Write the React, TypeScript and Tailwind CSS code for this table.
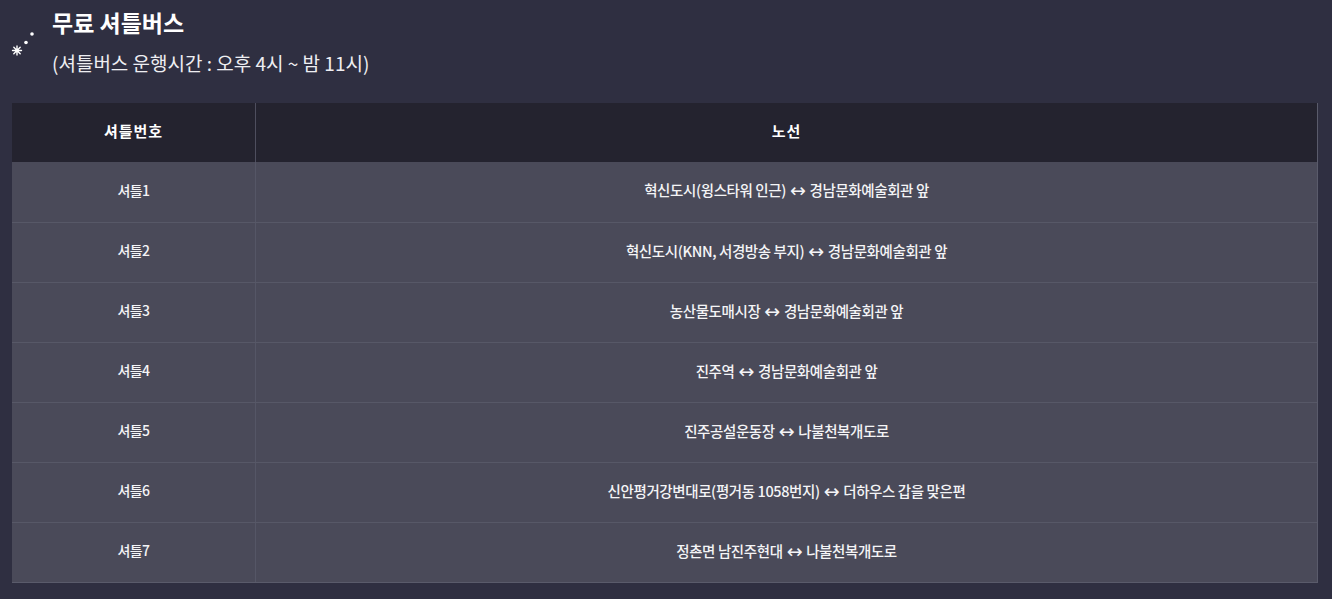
import React from "react";

const rows: [string, string, string][] = [
  ["셔틀1", "혁신도시(윙스타워 인근)", "경남문화예술회관 앞"],
  ["셔틀2", "혁신도시(KNN, 서경방송 부지)", "경남문화예술회관 앞"],
  ["셔틀3", "농산물도매시장", "경남문화예술회관 앞"],
  ["셔틀4", "진주역", "경남문화예술회관 앞"],
  ["셔틀5", "진주공설운동장", "나불천복개도로"],
  ["셔틀6", "신안평거강변대로(평거동 1058번지)", "더하우스 갑을 맞은편"],
  ["셔틀7", "정촌면 남진주현대", "나불천복개도로"],
];

function Sparkle() {
  return (
    <svg width="30" height="34" viewBox="0 0 30 34" className="shrink-0">
      <circle cx="24" cy="8" r="1.8" fill="#fff" />
      <circle cx="18" cy="16.5" r="1.8" fill="#fff" />
      <g stroke="#fff" strokeWidth="1.4" strokeLinecap="round">
        <line x1="9" y1="20" x2="9" y2="29" />
        <line x1="4.5" y1="24.5" x2="13.5" y2="24.5" />
        <line x1="5.8" y1="21.3" x2="12.2" y2="27.7" />
        <line x1="12.2" y1="21.3" x2="5.8" y2="27.7" />
      </g>
      <circle cx="9" cy="24.5" r="2" fill="#fff" />
    </svg>
  );
}

export default function App() {
  return (
    <div
      className="w-[1332px] h-[599px] bg-[#2f2f41] text-white overflow-hidden"
      style={{ fontFamily: '"Noto Sans CJK KR", "Noto Sans", sans-serif' }}
    >
      <div className="flex pl-[8px] pt-[6px]">
        <div className="pt-[20px]">
          <Sparkle />
        </div>
        <div className="ml-[14px]">
          <div className="text-[23px] font-bold leading-[32px] tracking-[0px]">무료 셔틀버스</div>
          <div className="text-[19px] leading-[28px] mt-[11px] tracking-[0px] text-[#eeeef2]">
            (셔틀버스 운행시간 : 오후 4시 ~ 밤 11시)
          </div>
        </div>
      </div>
      <div className="mx-[12px] mt-[26px] w-[1306px] border-r border-b border-[#5a5b6b]">
        <div className="flex h-[59px] bg-[#24232f]">
          <div className="w-[244px] flex items-center justify-center border-r border-[#4e4e5e] text-[15px] font-bold tracking-[1px] pb-[2px]">
            셔틀번호
          </div>
          <div className="flex-1 flex items-center justify-center text-[15px] font-bold tracking-[1px] pb-[2px]">
            노선
          </div>
        </div>
        {rows.map(([a, b, c], i) => (
          <div
            key={a}
            className={`flex h-[60px] bg-[#4a4a59] ${i === 0 ? "" : "border-t border-[#575867]"}`}
          >
            <div className="w-[244px] flex items-center justify-center border-r border-[#555666] text-[14px] font-medium tracking-[-0.6px] text-[#f4f4f6] pb-[4px]">
              {a}
            </div>
            <div className="flex-1 flex items-center justify-center text-[14.5px] font-medium tracking-[-0.4px] text-[#f4f4f6] pb-[4px] whitespace-pre">
              <span>{b}</span>
              <span
                className="mx-[4px] text-[19px] leading-[20px]"
                style={{ fontFamily: '"DejaVu Sans", sans-serif' }}
              >
                ↔
              </span>
              <span>{c}</span>
            </div>
          </div>
        ))}
      </div>
    </div>
  );
}
